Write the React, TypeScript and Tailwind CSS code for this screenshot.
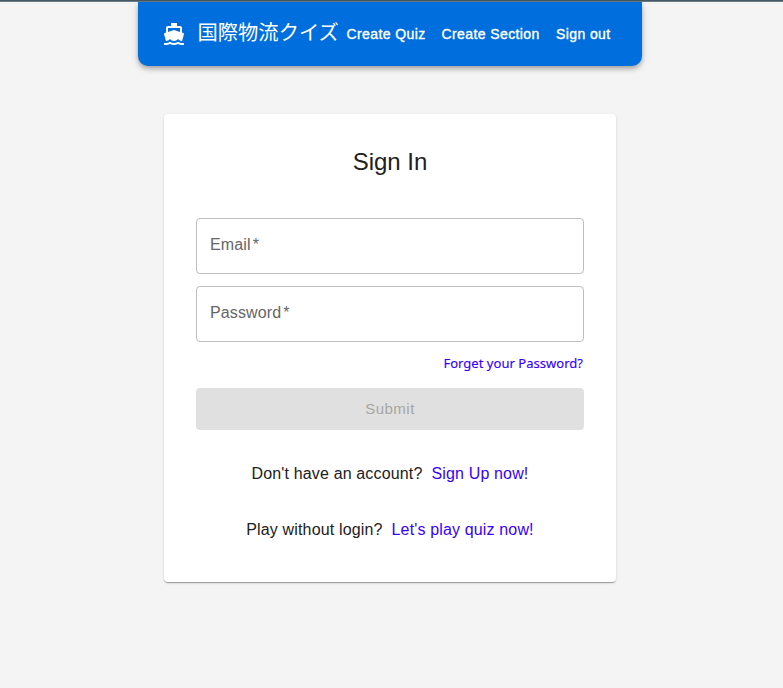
import { MdDirectionsBoatFilled } from "react-icons/md";

function NavItem({ label, className }: { label: string; className: string }) {
  return (
    <a className={`whitespace-nowrap text-[14px] leading-6 tracking-[0.4px] text-white [-webkit-text-stroke:0.35px_white] ${className}`}>
      {label}
    </a>
  );
}

function Field({ label, className }: { label: string; className: string }) {
  return (
    <label className="flex h-14 items-center rounded border border-[#bebebe] px-[13px] pb-[3px] text-base text-[#666]">
      <span className={className}>{label}</span>
      <span className="ml-0.5">*</span>
    </label>
  );
}

function Prompt({ question, action }: { question: string; action: string }) {
  return (
    <p className="mt-8 flex justify-center gap-[9px] whitespace-nowrap text-base leading-6 tracking-[0.15px]">
      <span>{question}</span>
      <a className="text-[#3700ff]">{action}</a>
    </p>
  );
}

export default function App() {
  return (
    <div className="min-h-[688px] bg-[#f4f4f4] font-['Liberation_Sans','Noto_Sans_CJK_JP',sans-serif] text-[#212121]">
      <div className="h-0.5 border-b border-[#687b84] bg-[#455a64]" />
      <div className="w-[780px]">
        <header className="mx-auto flex h-16 w-[504px] items-center rounded-b-[10px] bg-[#006edc] pl-6 text-white shadow-[0_2px_4px_-1px_rgba(0,0,0,0.2),0_4px_5px_rgba(0,0,0,0.14),0_1px_10px_rgba(0,0,0,0.12)]">
          <MdDirectionsBoatFilled className="size-6" />
          <h1 className="ml-[11.5px] w-[149px] whitespace-nowrap pb-0.5 text-[20.3px]">国際物流クイズ</h1>
          <NavItem label="Create Quiz" className="w-[95px]" />
          <NavItem label="Create Section" className="w-[114.5px]" />
          <NavItem label="Sign out" className="" />
        </header>
        <main className="mx-auto mt-12 h-[468px] w-[452px] rounded bg-white px-8 pt-8 shadow-[0_2px_1px_-1px_rgba(0,0,0,0.2),0_1px_1px_rgba(0,0,0,0.14),0_1px_3px_rgba(0,0,0,0.12)]">
          <h2 className="text-center text-2xl">Sign In</h2>
          <form className="mt-10 flex flex-col">
            <Field label="Email" className="tracking-[0.15px]" />
            <div className="h-3" />
            <Field label="Password" className="tracking-[0.12px]" />
            <a className="mt-[11px] mr-px self-end font-['Noto_Sans',sans-serif] text-[13px] leading-5 tracking-[0.03px] text-[#3700ff] [-webkit-text-stroke:0.15px_#3700ff]">
              Forget your Password?
            </a>
            <button className="mt-[15px] h-[42px] w-full rounded bg-[#e0e0e0] text-[15px] tracking-[0.5px] text-[#a6a6a6]">
              Submit
            </button>
          </form>
          <Prompt question="Don't have an account?" action="Sign Up now!" />
          <Prompt question="Play without login?" action="Let's play quiz now!" />
        </main>
      </div>
    </div>
  );
}
